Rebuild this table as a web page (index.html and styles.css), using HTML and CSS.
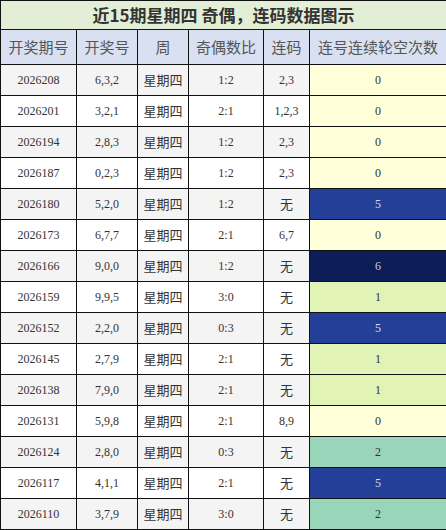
FILE: index.html
```html
<!DOCTYPE html>
<html lang="zh-CN">
<head>
  <meta charset="UTF-8">
  <title>近15期星期四 奇偶，连码数据图示</title>
  <link rel="stylesheet" href="styles.css">
</head>
<body>
  <table class="grid">
    <colgroup>
      <col class="c1"><col class="c2"><col class="c3"><col class="c4"><col class="c5"><col class="c6">
    </colgroup>
    <thead>
      <tr><th class="title" colspan="6">近15期星期四 奇偶，连码数据图示</th></tr>
      <tr class="head">
        <th>开奖期号</th><th>开奖号</th><th>周</th><th>奇偶数比</th><th>连码</th><th>连号连续轮空次数</th>
      </tr>
    </thead>
    <tbody>
      <tr><td>2026208</td><td>6,3,2</td><td class="wk">星期四</td><td>1:2</td><td>2,3</td><td class="v0">0</td></tr>
      <tr><td>2026201</td><td>3,2,1</td><td class="wk">星期四</td><td>2:1</td><td>1,2,3</td><td class="v0">0</td></tr>
      <tr><td>2026194</td><td>2,8,3</td><td class="wk">星期四</td><td>1:2</td><td>2,3</td><td class="v0">0</td></tr>
      <tr><td>2026187</td><td>0,2,3</td><td class="wk">星期四</td><td>1:2</td><td>2,3</td><td class="v0">0</td></tr>
      <tr><td>2026180</td><td>5,2,0</td><td class="wk">星期四</td><td>1:2</td><td class="wk">无</td><td class="v5">5</td></tr>
      <tr><td>2026173</td><td>6,7,7</td><td class="wk">星期四</td><td>2:1</td><td>6,7</td><td class="v0">0</td></tr>
      <tr><td>2026166</td><td>9,0,0</td><td class="wk">星期四</td><td>1:2</td><td class="wk">无</td><td class="v6">6</td></tr>
      <tr><td>2026159</td><td>9,9,5</td><td class="wk">星期四</td><td>3:0</td><td class="wk">无</td><td class="v1">1</td></tr>
      <tr><td>2026152</td><td>2,2,0</td><td class="wk">星期四</td><td>0:3</td><td class="wk">无</td><td class="v5">5</td></tr>
      <tr><td>2026145</td><td>2,7,9</td><td class="wk">星期四</td><td>2:1</td><td class="wk">无</td><td class="v1">1</td></tr>
      <tr><td>2026138</td><td>7,9,0</td><td class="wk">星期四</td><td>2:1</td><td class="wk">无</td><td class="v1">1</td></tr>
      <tr><td>2026131</td><td>5,9,8</td><td class="wk">星期四</td><td>2:1</td><td>8,9</td><td class="v0">0</td></tr>
      <tr><td>2026124</td><td>2,8,0</td><td class="wk">星期四</td><td>0:3</td><td class="wk">无</td><td class="v2">2</td></tr>
      <tr><td>2026117</td><td>4,1,1</td><td class="wk">星期四</td><td>2:1</td><td class="wk">无</td><td class="v5">5</td></tr>
      <tr><td>2026110</td><td>3,7,9</td><td class="wk">星期四</td><td>3:0</td><td class="wk">无</td><td class="v2">2</td></tr>
    </tbody>
  </table>
</body>
</html>
```

FILE: styles.css
```css
body { margin: 0; padding: 0; background: #fff; font-family: "Liberation Serif", "Noto Sans CJK SC", serif; }
.grid { width: 446px; border-collapse: collapse; table-layout: fixed; border: 1px solid #111; }
.c1 { width: 76px; } .c2 { width: 61px; } .c3 { width: 51px; } .c4 { width: 75px; } .c5 { width: 46px; } .c6 { width: 137px; }
.grid th, .grid td { border: 1px solid #111; text-align: center; padding: 0; overflow: hidden; white-space: nowrap; }
.title { height: 28px; background: #e3eed6; color: #333; font-family: "Noto Sans CJK SC", sans-serif; font-size: 17px; font-weight: bold; line-height: 24px; }
.head th { height: 34px; background: #d9e0f1; color: #555; font-family: "Noto Sans CJK SC", sans-serif; font-size: 15px; font-weight: normal; line-height: 20px; }
.grid td { height: 30px; font-size: 12px; line-height: 16px; color: #333; }
.grid tbody tr:nth-child(odd) td { background: #f4f4f4; }
.grid td.wk { font-family: "Noto Sans CJK SC", sans-serif; font-size: 13px; color: #333; }
.grid tbody tr td.v0 { background: #ffffd9; }
.grid tbody tr td.v1 { background: #e2f3b6; }
.grid tbody tr td.v2 { background: #99d6b9; }
.grid tbody tr td.v5 { background: #243f98; color: #d8dcea; }
.grid tbody tr td.v6 { background: #0c1d58; color: #c8cde0; }
```
